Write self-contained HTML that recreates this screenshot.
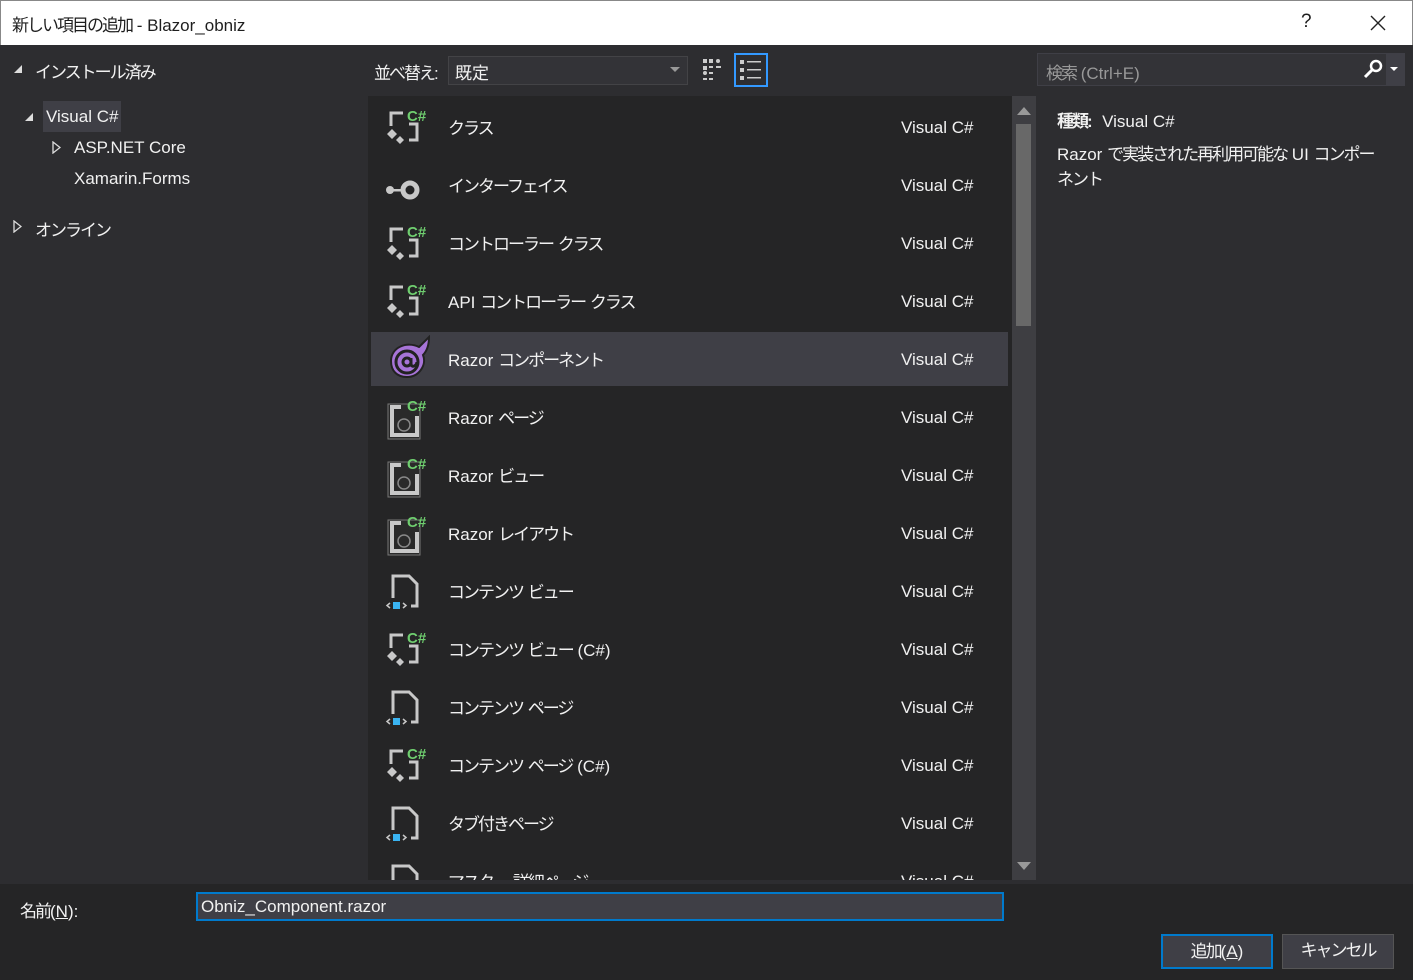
<!DOCTYPE html>
<html><head><meta charset="utf-8"><style>
*{margin:0;padding:0;box-sizing:border-box}
body{width:1413px;height:980px;background:#2d2d30;font-family:"Liberation Sans","Noto Sans CJK JP",sans-serif;color:#f1f1f1;position:relative;overflow:hidden;font-size:17px}
.abs{position:absolute}
.j{letter-spacing:-2px}
.title{left:0;top:0;width:1413px;height:45px;background:#fff;color:#1e1e1e;border:1px solid #888;border-bottom:none}
.list{left:368px;top:96px;width:668px;height:784px;background:#252526;overflow:hidden}
.row{position:absolute;left:3px;width:637px;height:54px}
.row .ic{position:absolute;left:12px;top:6px}
.row .n{position:absolute;left:77px;top:16px}
.row .t{position:absolute;left:530px;top:20px}
.sel{background:#3f3f46}
.footer{left:0;top:884px;width:1413px;height:96px;background:#252526}
.btn{height:35px;width:112px;background:#3f3f46;border:1px solid #555;text-align:center;line-height:32px;font-size:17px}
</style></head><body>
<div class="abs title"><span class="abs" style="left:11px;top:10px;font-size:17px"><span class="j">新しい項目の追加</span> - Blazor_obniz</span><span class="abs" style="left:1300px;top:10px;font-size:19px">?</span><svg class="abs" style="left:1369px;top:14px" width="16" height="16"><path d="M1 1L15 15M15 1L1 15" stroke="#222" stroke-width="1.4"/></svg></div>

<svg class="abs" style="left:13px;top:64px" width="10" height="10"><path d="M9 1V9H1Z" fill="#ddd"/></svg>
<span class="abs j" style="left:35px;top:58px">インストール済み</span>
<svg class="abs" style="left:24px;top:112px" width="10" height="10"><path d="M9 1V9H1Z" fill="#ddd"/></svg>
<div class="abs" style="left:43px;top:101px;width:78px;height:31px;background:#3f3f46"></div>
<span class="abs" style="left:46px;top:107px">Visual C#</span>
<svg class="abs" style="left:52px;top:141px" width="9" height="13"><path d="M1 1L8 6.5L1 12Z" fill="none" stroke="#ddd" stroke-width="1.3"/></svg>
<span class="abs" style="left:74px;top:138px">ASP.NET Core</span>
<span class="abs" style="left:74px;top:169px">Xamarin.Forms</span>
<svg class="abs" style="left:13px;top:220px" width="9" height="13"><path d="M1 1L8 6.5L1 12Z" fill="none" stroke="#ddd" stroke-width="1.3"/></svg>
<span class="abs j" style="left:35px;top:216px">オンライン</span>

<span class="abs" style="left:374px;top:59px"><span class="j">並べ替え</span>:</span>
<div class="abs" style="left:448px;top:56px;width:240px;height:29px;background:#333337;border:1px solid #434346"></div>
<span class="abs" style="left:455px;top:59px">既定</span>
<svg class="abs" style="left:670px;top:67px" width="10" height="6"><path d="M0 0H10L5 5Z" fill="#999"/></svg>
<svg class="abs" style="left:703px;top:59px" width="20" height="22" fill="#ccc"><rect x="0" y="0" width="4" height="4"/><rect x="6" y="0" width="4" height="4"/><circle cx="15" cy="2" r="2"/><rect x="0" y="7" width="4" height="4"/><rect x="6" y="7" width="4" height="2"/><rect x="13" y="7" width="5" height="2"/><circle cx="2" cy="14" r="2"/><rect x="6" y="13" width="4" height="2"/><rect x="0" y="19" width="4" height="2"/><rect x="6" y="19" width="4" height="2"/></svg>
<div class="abs" style="left:734px;top:53px;width:34px;height:34px;border:2px solid #3399ff"></div>
<svg class="abs" style="left:740px;top:59px" width="22" height="22" fill="#ccc"><rect x="0" y="1" width="4" height="4"/><rect x="7" y="2" width="14" height="1.5"/><rect x="0" y="9" width="4" height="4"/><rect x="7" y="10" width="14" height="1.5"/><rect x="0" y="17" width="4" height="4"/><rect x="7" y="18" width="14" height="1.5"/></svg>

<div class="abs" style="left:1037px;top:53px;width:350px;height:33px;background:#333337;border:1px solid #3f3f46"></div>
<div class="abs" style="left:1387px;top:53px;width:18px;height:33px;background:#3f3f46"></div>
<span class="abs" style="left:1046px;top:59px;color:#999"><span class="j">検索</span> (Ctrl+E)</span>
<svg class="abs" style="left:1362px;top:59px" width="36" height="20"><circle cx="14" cy="7" r="5" fill="none" stroke="#fff" stroke-width="2.5"/><path d="M10 11L3 18" stroke="#fff" stroke-width="3"/><path d="M28 8H36L32 12Z" fill="#fff"/></svg>

<div class="abs list">
<div class="row" style="top:2px"><svg class="ic" width="50" height="46"><g fill="none" stroke="#c8c8c8" stroke-width="3"><path d="M8 22V9H20"/><path d="M26 20H34V36H26"/></g><text x="24" y="17" fill="#6fce6f" font-size="15" font-weight="bold" font-family="Liberation Sans">C#</text><path d="M4 30L9 25L14 30L9 35Z M13 36L17 32L21 36L17 40Z" fill="#c8c8c8"/></svg><span class="n j">クラス</span><span class="t">Visual C#</span></div>
<div class="row" style="top:60px"><svg class="ic" width="50" height="46"><circle cx="7" cy="28" r="4" fill="#c8c8c8"/><rect x="7" y="27" width="12" height="2.5" fill="#c8c8c8"/><circle cx="27" cy="28" r="7" fill="none" stroke="#c8c8c8" stroke-width="5"/></svg><span class="n j">インターフェイス</span><span class="t">Visual C#</span></div>
<div class="row" style="top:118px"><svg class="ic" width="50" height="46"><g fill="none" stroke="#c8c8c8" stroke-width="3"><path d="M8 22V9H20"/><path d="M26 20H34V36H26"/></g><text x="24" y="17" fill="#6fce6f" font-size="15" font-weight="bold" font-family="Liberation Sans">C#</text><path d="M4 30L9 25L14 30L9 35Z M13 36L17 32L21 36L17 40Z" fill="#c8c8c8"/></svg><span class="n"><span class="j">コントローラー</span> <span class="j">クラス</span></span><span class="t">Visual C#</span></div>
<div class="row" style="top:176px"><svg class="ic" width="50" height="46"><g fill="none" stroke="#c8c8c8" stroke-width="3"><path d="M8 22V9H20"/><path d="M26 20H34V36H26"/></g><text x="24" y="17" fill="#6fce6f" font-size="15" font-weight="bold" font-family="Liberation Sans">C#</text><path d="M4 30L9 25L14 30L9 35Z M13 36L17 32L21 36L17 40Z" fill="#c8c8c8"/></svg><span class="n">API <span class="j">コントローラー</span> <span class="j">クラス</span></span><span class="t">Visual C#</span></div>
<div class="row sel" style="top:236px"><svg class="ic" style="top:3px" width="50" height="48"><path d="M8 26C8 12 24 6 36 12C40 8 44 4 46 2C46 10 44 16 40 20C44 30 36 42 24 42C14 42 8 36 8 26Z" fill="#a774d8" stroke="#222" stroke-width="2"/><circle cx="24" cy="27" r="11" fill="none" stroke="#222" stroke-width="3"/><circle cx="24" cy="27" r="4" fill="none" stroke="#222" stroke-width="3"/><path d="M28 23V30C30 33 34 30 34 27" fill="none" stroke="#222" stroke-width="3"/></svg><span class="n" style="top:14px">Razor <span class="j">コンポーネント</span></span><span class="t" style="top:18px">Visual C#</span></div>
<div class="row" style="top:292px"><svg class="ic" width="50" height="46"><rect x="5" y="10" width="32" height="35" fill="#2a2a2a" stroke="#777" stroke-width="1"/><path d="M18 13H9V41H34V22" fill="none" stroke="#c8c8c8" stroke-width="4"/><circle cx="21" cy="31" r="6" fill="none" stroke="#888" stroke-width="1.5"/><text x="24" y="17" fill="#6fce6f" font-size="15" font-weight="bold" font-family="Liberation Sans">C#</text></svg><span class="n">Razor <span class="j">ページ</span></span><span class="t">Visual C#</span></div>
<div class="row" style="top:350px"><svg class="ic" width="50" height="46"><rect x="5" y="10" width="32" height="35" fill="#2a2a2a" stroke="#777" stroke-width="1"/><path d="M18 13H9V41H34V22" fill="none" stroke="#c8c8c8" stroke-width="4"/><circle cx="21" cy="31" r="6" fill="none" stroke="#888" stroke-width="1.5"/><text x="24" y="17" fill="#6fce6f" font-size="15" font-weight="bold" font-family="Liberation Sans">C#</text></svg><span class="n">Razor <span class="j">ビュー</span></span><span class="t">Visual C#</span></div>
<div class="row" style="top:408px"><svg class="ic" width="50" height="46"><rect x="5" y="10" width="32" height="35" fill="#2a2a2a" stroke="#777" stroke-width="1"/><path d="M18 13H9V41H34V22" fill="none" stroke="#c8c8c8" stroke-width="4"/><circle cx="21" cy="31" r="6" fill="none" stroke="#888" stroke-width="1.5"/><text x="24" y="17" fill="#6fce6f" font-size="15" font-weight="bold" font-family="Liberation Sans">C#</text></svg><span class="n">Razor <span class="j">レイアウト</span></span><span class="t">Visual C#</span></div>
<div class="row" style="top:466px"><svg class="ic" width="50" height="46"><path d="M10 30V8H26L34 16V38H28" fill="none" stroke="#c8c8c8" stroke-width="3"/><rect x="10" y="34" width="7" height="7" fill="#3ab4f2"/><path d="M7 35L4 37.5L7 40M20 35L23 37.5L20 40" fill="none" stroke="#c8c8c8" stroke-width="1.5"/></svg><span class="n"><span class="j">コンテンツ</span> <span class="j">ビュー</span></span><span class="t">Visual C#</span></div>
<div class="row" style="top:524px"><svg class="ic" width="50" height="46"><g fill="none" stroke="#c8c8c8" stroke-width="3"><path d="M8 22V9H20"/><path d="M26 20H34V36H26"/></g><text x="24" y="17" fill="#6fce6f" font-size="15" font-weight="bold" font-family="Liberation Sans">C#</text><path d="M4 30L9 25L14 30L9 35Z M13 36L17 32L21 36L17 40Z" fill="#c8c8c8"/></svg><span class="n"><span class="j">コンテンツ</span> <span class="j">ビュー</span> (C#)</span><span class="t">Visual C#</span></div>
<div class="row" style="top:582px"><svg class="ic" width="50" height="46"><path d="M10 30V8H26L34 16V38H28" fill="none" stroke="#c8c8c8" stroke-width="3"/><rect x="10" y="34" width="7" height="7" fill="#3ab4f2"/><path d="M7 35L4 37.5L7 40M20 35L23 37.5L20 40" fill="none" stroke="#c8c8c8" stroke-width="1.5"/></svg><span class="n"><span class="j">コンテンツ</span> <span class="j">ページ</span></span><span class="t">Visual C#</span></div>
<div class="row" style="top:640px"><svg class="ic" width="50" height="46"><g fill="none" stroke="#c8c8c8" stroke-width="3"><path d="M8 22V9H20"/><path d="M26 20H34V36H26"/></g><text x="24" y="17" fill="#6fce6f" font-size="15" font-weight="bold" font-family="Liberation Sans">C#</text><path d="M4 30L9 25L14 30L9 35Z M13 36L17 32L21 36L17 40Z" fill="#c8c8c8"/></svg><span class="n"><span class="j">コンテンツ</span> <span class="j">ページ</span> (C#)</span><span class="t">Visual C#</span></div>
<div class="row" style="top:698px"><svg class="ic" width="50" height="46"><path d="M10 30V8H26L34 16V38H28" fill="none" stroke="#c8c8c8" stroke-width="3"/><rect x="10" y="34" width="7" height="7" fill="#3ab4f2"/><path d="M7 35L4 37.5L7 40M20 35L23 37.5L20 40" fill="none" stroke="#c8c8c8" stroke-width="1.5"/></svg><span class="n j">タブ付きページ</span><span class="t">Visual C#</span></div>
<div class="row" style="top:756px"><svg class="ic" width="50" height="46"><path d="M10 30V8H26L34 16V38H28" fill="none" stroke="#c8c8c8" stroke-width="3"/></svg><span class="n"><span class="j">マスター</span> <span class="j">詳細ページ</span></span><span class="t">Visual C#</span></div>
<div class="abs" style="left:644px;top:0;width:24px;height:784px;background:#3e3e42"></div>
<svg class="abs" style="left:649px;top:11px" width="14" height="8"><path d="M0 8H14L7 0Z" fill="#999"/></svg>
<div class="abs" style="left:648px;top:28px;width:15px;height:202px;background:#686868"></div>
<svg class="abs" style="left:649px;top:766px" width="14" height="8"><path d="M0 0H14L7 8Z" fill="#999"/></svg>
</div>

<span class="abs" style="left:1057px;top:107px"><b class="j">種類</b><b>:</b>&nbsp; Visual C#</span>
<span class="abs" style="left:1057px;top:142px;width:325px;line-height:25px">Razor <span class="j">で実装された再利用可能な</span> UI <span class="j">コンポーネント</span></span>

<div class="abs footer"></div>
<span class="abs" style="left:20px;top:897px"><span class="j">名前</span>(<u>N</u>):</span>
<div class="abs" style="left:196px;top:892px;width:808px;height:29px;background:#3f3f46;border:2px solid #007acc"></div>
<span class="abs" style="left:201px;top:897px">Obniz_Component.razor</span>
<div class="abs btn" style="left:1161px;top:934px;border:2px solid #007acc"><span class="j">追加</span>(<u>A</u>)</div>
<div class="abs btn j" style="left:1282px;top:934px">キャンセル</div>
</body></html>
